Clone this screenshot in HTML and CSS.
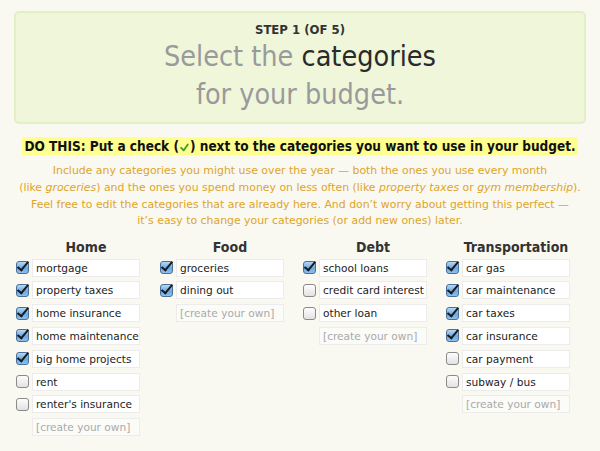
FILE: index.html
```html
<!DOCTYPE html>
<html>
<head>
<meta charset="utf-8">
<link rel="stylesheet" href="styles.css">
</head>
<body>
<div class="header">
  <div class="step">STEP 1 (OF 5)</div>
  <div class="title">Select the <span class="dark">categories</span><br>for your budget.</div>
</div>
<div class="dothis"><span class="hl">DO THIS: Put a check (<svg class="tick" width="9" height="9" viewBox="0 0 9 9"><path d="M1.2 4.8 L3.6 7.4 L7.8 1.4" fill="none" stroke="#3a9e2a" stroke-width="1.8" stroke-linecap="round" stroke-linejoin="round"/></svg>) next to the categories you want to use in your budget.</span></div>
<p class="intro">Include any categories you might use over the year — both the ones you use every month<br>(like <i>groceries</i>) and the ones you spend money on less often (like <i>property taxes</i> or <i>gym membership</i>).<br>Feel free to edit the categories that are already here. And don’t worry about getting this perfect —<br>it’s easy to change your categories (or add new ones) later.</p>
<div class="cols">
  <div class="col">
    <div class="colhead">Home</div>
    <div class="row"><span class="cb on"></span><span class="field">mortgage</span></div>
    <div class="row"><span class="cb on"></span><span class="field">property taxes</span></div>
    <div class="row"><span class="cb on"></span><span class="field">home insurance</span></div>
    <div class="row"><span class="cb on"></span><span class="field">home maintenance</span></div>
    <div class="row"><span class="cb on"></span><span class="field">big home projects</span></div>
    <div class="row"><span class="cb"></span><span class="field">rent</span></div>
    <div class="row"><span class="cb"></span><span class="field">renter's insurance</span></div>
    <div class="row"><span class="cb none"></span><span class="field new">[create your own]</span></div>
  </div>
  <div class="col">
    <div class="colhead">Food</div>
    <div class="row"><span class="cb on"></span><span class="field">groceries</span></div>
    <div class="row"><span class="cb on"></span><span class="field">dining out</span></div>
    <div class="row"><span class="cb none"></span><span class="field new">[create your own]</span></div>
  </div>
  <div class="col">
    <div class="colhead">Debt</div>
    <div class="row"><span class="cb on"></span><span class="field">school loans</span></div>
    <div class="row"><span class="cb"></span><span class="field">credit card interest</span></div>
    <div class="row"><span class="cb"></span><span class="field">other loan</span></div>
    <div class="row"><span class="cb none"></span><span class="field new">[create your own]</span></div>
  </div>
  <div class="col">
    <div class="colhead">Transportation</div>
    <div class="row"><span class="cb on"></span><span class="field">car gas</span></div>
    <div class="row"><span class="cb on"></span><span class="field">car maintenance</span></div>
    <div class="row"><span class="cb on"></span><span class="field">car taxes</span></div>
    <div class="row"><span class="cb on"></span><span class="field">car insurance</span></div>
    <div class="row"><span class="cb"></span><span class="field">car payment</span></div>
    <div class="row"><span class="cb"></span><span class="field">subway / bus</span></div>
    <div class="row"><span class="cb none"></span><span class="field new">[create your own]</span></div>
  </div>
</div>
</body>
</html>
```
FILE: styles.css
```css
html, body {
  margin: 0;
  padding: 0;
  background: #f9f9f1;
}
body {
  width: 600px;
  height: 451px;
  overflow: hidden;
  font-family: "DejaVu Sans Condensed", "DejaVu Sans", sans-serif;
}
.header {
  margin: 11px 14px 0 14px;
  height: 109px;
  background: #eff6da;
  border: 2px solid #e3efc4;
  border-radius: 5px;
  text-align: center;
}
.step {
  padding-top: 9px;
  font-size: 13px;
  font-weight: bold;
  color: #333;
  line-height: 16px;
}
.title {
  font-size: 28.5px;
  line-height: 38px;
  color: #9a9a9a;
  margin-top: 0;
}
.title .dark {
  color: #2a2a2a;
}
.dothis {
  text-align: center;
  margin-top: 14px;
  font-size: 13.5px;
  font-weight: bold;
  color: #111;
  line-height: 16px;
}
.hl {
  background: #ffff8f;
  padding: 1px 2px;
}
.tick {
  vertical-align: -1px;
  margin: 0 1px;
}
.intro {
  margin: 9px 0 0 0;
  text-align: center;
  font-family: "DejaVu Sans", sans-serif;
  font-size: 10.9px;
  line-height: 16.8px;
  color: #dea42a;
}
.cols {
  display: grid;
  grid-template-columns: 144px 143px 143px 143px;
  padding-left: 16px;
  margin-top: 8px;
}
.colhead {
  text-align: center;
  font-size: 14px;
  font-weight: bold;
  color: #333;
  line-height: 18px;
  width: 140px;
}
.row {
  display: flex;
  align-items: center;
  gap: 3px;
  height: 22.8px;
}
.cb {
  width: 11px;
  height: 11px;
  border: 1px solid #8a8a8a;
  border-radius: 3px;
  background: linear-gradient(#fdfdfd, #e2e2e2);
  box-sizing: content-box;
  position: relative;
  flex: none;
}
.cb.none {
  visibility: hidden;
}
.cb.on {
  border-color: #4a6f99;
  background: linear-gradient(#b8d8f5, #6aa8e3 55%, #8cc0ee);
}
.cb.on::after {
  content: "";
  position: absolute;
  left: 3px;
  top: -3px;
  width: 4px;
  height: 10px;
  border-right: 2px solid #1a1a1a;
  border-bottom: 2px solid #1a1a1a;
  transform: rotate(40deg);
}
.field {
  display: block;
  width: 103px;
  height: 16px;
  padding-left: 3px;
  border: 1px solid #ececec;
  background: #fff;
  font-family: "DejaVu Sans", sans-serif;
  font-size: 10.6px;
  line-height: 16px;
  color: #222;
  white-space: nowrap;
  overflow: hidden;
}
.field.new {
  color: #aaa;
  background: #fbfbf8;
}
```
